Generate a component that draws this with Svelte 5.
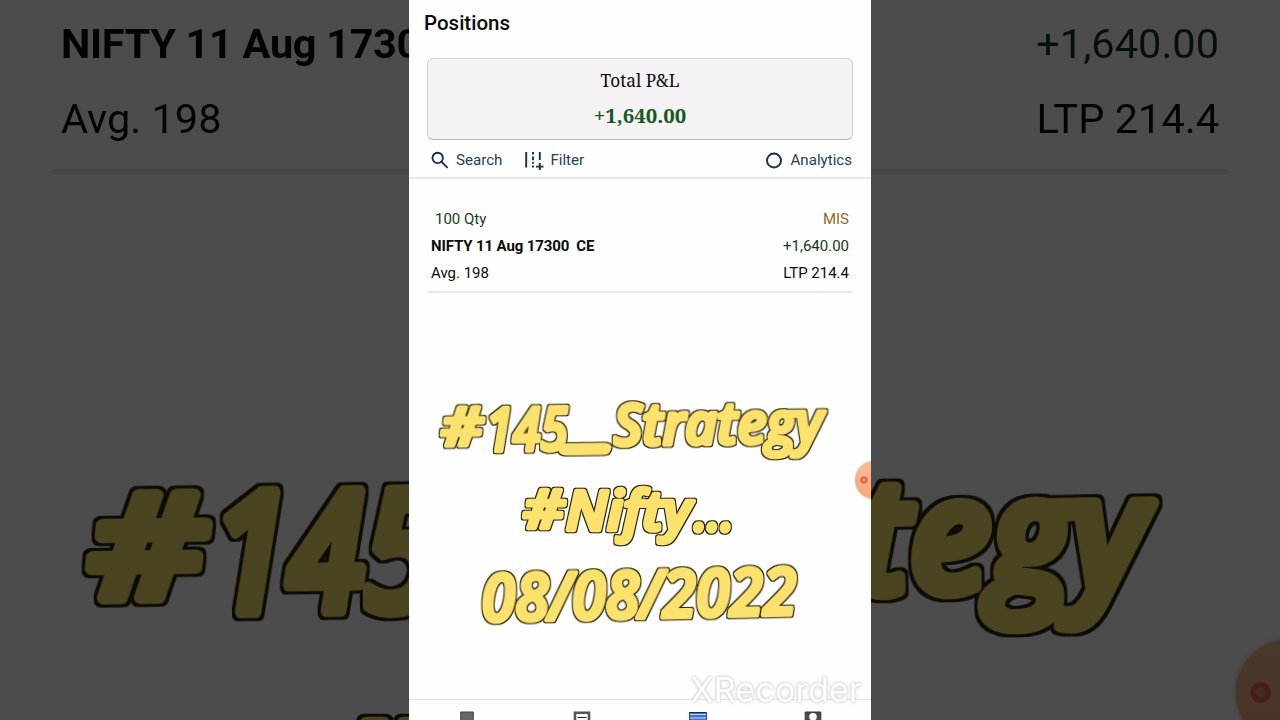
<script>
  const position = {
    qty: "100 Qty",
    product: "MIS",
    name: "NIFTY 11 Aug 17300",
    type: "CE",
    pnl: "+1,640.00",
    avg: "Avg. 198",
    ltp: "LTP 214.4",
  };
</script>

{#snippet screen()}
  <h1>Positions</h1>

  <section class="total">
    <span class="label">Total P&L</span>
    <strong>{position.pnl}</strong>
  </section>

  <div class="toolbar">
    <span class="tool search">
      <svg width="18" height="18" viewBox="0 0 18 18">
        <circle cx="6.7" cy="6.9" r="5.2" />
        <path d="M10.6 10.8L16.6 16.8" />
      </svg>
      Search
    </span>
    <span class="tool filter">
      <svg width="20" height="20" viewBox="0 0 20 20">
        <path d="M2.2 2V17.5M15.8 2V10M15.8 13V20M12 16.6H19.5" />
        <path d="M9 2V4.6M9 6.5V10.2M9 12V13.8M9 15.5V17.5" />
      </svg>
      Filter
    </span>
    <span class="tool analytics">
      <svg width="18" height="18" viewBox="0 0 18 18">
        <circle cx="9" cy="9.5" r="7" />
      </svg>
      Analytics
    </span>
  </div>

  <article class="position">
    <div class="row">
      <span class="qty">{position.qty}</span>
      <span class="product">{position.product}</span>
    </div>
    <div class="row">
      <b>{position.name}&nbsp; {position.type}</b>
      <span class="gain">{position.pnl}</span>
    </div>
    <div class="row">
      <span>{position.avg}</span>
      <span>{position.ltp}</span>
    </div>
  </article>

  <svg class="caption" width="462" height="406" viewBox="0 0 462 406">
    <filter id="outline" x="-5%" y="-20%" width="110%" height="140%" color-interpolation-filters="sRGB">
      <feMorphology in="SourceAlpha" operator="dilate" radius="1" result="grown" />
      <feFlood flood-color="#29240f" />
      <feComposite in2="grown" operator="in" result="edge" />
      <feMerge>
        <feMergeNode in="edge" />
        <feMergeNode in="SourceGraphic" />
      </feMerge>
    </filter>
    <text font-size="57" transform="rotate(-0.8 230 157)"
      ><tspan x="32" y="150" font-size="52" textLength="42" lengthAdjust="spacingAndGlyphs">#</tspan><tspan x="77" y="156" font-size="60" textLength="82" lengthAdjust="spacingAndGlyphs">145</tspan><tspan class="dash" x="166" y="149" font-size="48" textLength="35" lengthAdjust="spacingAndGlyphs">_</tspan><tspan x="205" y="152" textLength="209" lengthAdjust="spacingAndGlyphs">Strategy</tspan></text
    >
    <text font-size="55"
      ><tspan x="114" y="235" font-size="52" textLength="41" lengthAdjust="spacingAndGlyphs">#</tspan><tspan x="157" y="237" textLength="125" lengthAdjust="spacingAndGlyphs">Nifty</tspan><tspan x="285" y="238" textLength="40" lengthAdjust="spacingAndGlyphs">...</tspan></text
    >
    <text
      x="73"
      y="325"
      font-size="65"
      textLength="315"
      lengthAdjust="spacingAndGlyphs"
      transform="rotate(-1.3 230 325)">08/08/2022</text
    >
  </svg>

  <nav>
    <svg viewBox="0 0 18 22"><path fill="#666" stroke="#444" d="M2.7 2H15.3V22H2.7Z" /></svg>
    <svg viewBox="0 0 18 22">
      <path fill="#fff" stroke="#555" stroke-width="2.6" d="M2 2.8H16V22H2Z" />
      <path fill="none" stroke="#222" stroke-width="1.2" d="M4.5 7.5H13.5M4.5 11.5H13.5" />
    </svg>
    <svg viewBox="0 0 18 22">
      <path fill="#3f72d9" stroke="#13254d" d="M0 3.2Q0 2.5 .7 2.5H17.3Q18 2.5 18 3.2V22H0Z" />
      <path fill="none" stroke="#c9dcff" d="M1 4.5H17M1 8H17" />
    </svg>
    <svg viewBox="0 0 18 22">
      <path fill="#4a4a4a" stroke="#333" d="M1.2 2H16.8V22H1.2Z" />
      <circle cx="9" cy="6.8" r="3.8" fill="#fff" />
    </svg>
  </nav>

  <span class="recorder"></span>
{/snippet}

<main>
  <div class="phone backdrop" aria-hidden="true">{@render screen()}</div>
  <div class="phone">
    {@render screen()}
    <span class="watermark">XRecorder</span>
  </div>
</main>

<style>
  :global(body) {
    margin: 0;
    background: #4d4d4d;
  }

  main {
    position: relative;
    width: 1280px;
    height: 720px;
    overflow: hidden;
    display: flex;
    justify-content: center;
    font-family: Roboto, sans-serif;
  }

  .phone {
    position: relative;
    width: 462px;
    height: 720px;
    overflow: hidden;
    flex-shrink: 0;
    display: flex;
    flex-direction: column;
    background: #fefefe;
    color: #0b0b0b;
  }

  /* same screen again, blown up to fill the width and dimmed */
  .backdrop {
    position: absolute;
    top: 0;
    left: 409px;
    transform: scale(2.7706);
    filter: brightness(0.3);
  }

  h1 {
    margin: 0;
    padding: 9.5px 15px 0;
    height: 48px;
    box-sizing: border-box;
    flex-shrink: 0;
    font-size: 20.5px;
    line-height: 26px;
    font-weight: 500;
  }

  .total {
    display: flex;
    flex-direction: column;
    align-items: center;
    box-sizing: border-box;
    height: 82px;
    margin: 10px 18px 0;
    padding-top: 10px;
    flex-shrink: 0;
    border: 1px solid #d3d3d3;
    border-bottom-color: #b5b5b5;
    border-radius: 6px;
    background: #f4f2f3;
    font-family: "Noto Serif", "DejaVu Serif Condensed", "DejaVu Serif", serif;

    .label {
      font-size: 17.2px;
      line-height: 24px;
    }

    strong {
      margin-top: 10px;
      font-size: 20.4px;
      line-height: 24px;
      color: #145a22;
    }
  }

  .toolbar {
    display: flex;
    align-items: center;
    height: 39px;
    box-sizing: border-box;
    padding: 2px 19px 0 22px;
    flex-shrink: 0;
    border-bottom: 2px solid #e9e9e9;
    color: #243e5c;
    font-size: 15.1px;

    .tool {
      display: flex;
      align-items: center;
    }

    svg {
      fill: none;
      stroke: #182d52;
      stroke-width: 1.9;
    }

    .search {
      gap: 7px;
    }

    .filter {
      margin-left: 22px;
      gap: 6px;
    }

    .analytics {
      margin-left: auto;
      gap: 7px;
    }
  }

  .position {
    box-sizing: border-box;
    height: 114px;
    margin: 0 19px;
    padding: 26.6px 3px 0;
    flex-shrink: 0;
    border-bottom: 2px solid #e9e9e9;
    font-size: 15px;

    .row {
      display: flex;
      justify-content: space-between;
      line-height: 27.2px;
    }

    b {
      letter-spacing: -0.13px;
    }

    .qty {
      margin-left: 4px;
      color: #173f20;
    }

    .product {
      color: #8d6d1b;
    }

    .gain {
      color: #12391b;
    }
  }

  .caption {
    flex-shrink: 0;

    text {
      font-family: "Open Sans", "Noto Sans", sans-serif;
      font-style: italic;
      font-weight: 600;
      fill: #fbe26c;
      stroke: #fbe26c;
      stroke-width: 4.6px;
      stroke-linejoin: round;
      stroke-linecap: round;
      filter: url(#outline);
    }

    .dash {
      stroke-width: 9px;
    }
  }

  nav {
    display: flex;
    justify-content: space-around;
    padding-top: 10px;
    border-top: 1px solid #e2e2e2;

    svg {
      width: 18px;
      height: 22px;
    }
  }

  .recorder {
    position: absolute;
    left: 446px;
    top: 461px;
    width: 38px;
    height: 38px;
    border-radius: 50%;
    background: radial-gradient(circle at 9px 19px, #e98a72 0 1.8px, #e85f4e 2px 3.4px, transparent 4px),
      linear-gradient(#f4bd96, #fba679);
    box-shadow: 0 0 2px #bbb;
  }

  .watermark {
    position: absolute;
    right: 9px;
    bottom: 10px;
    font-family: Inter, sans-serif;
    font-size: 34px;
    line-height: 40px;
    letter-spacing: 0.2px;
    color: #fff;
    text-shadow: 0 0 2px #bbb, 0 0 4px #d8d8d8;
  }
</style>
